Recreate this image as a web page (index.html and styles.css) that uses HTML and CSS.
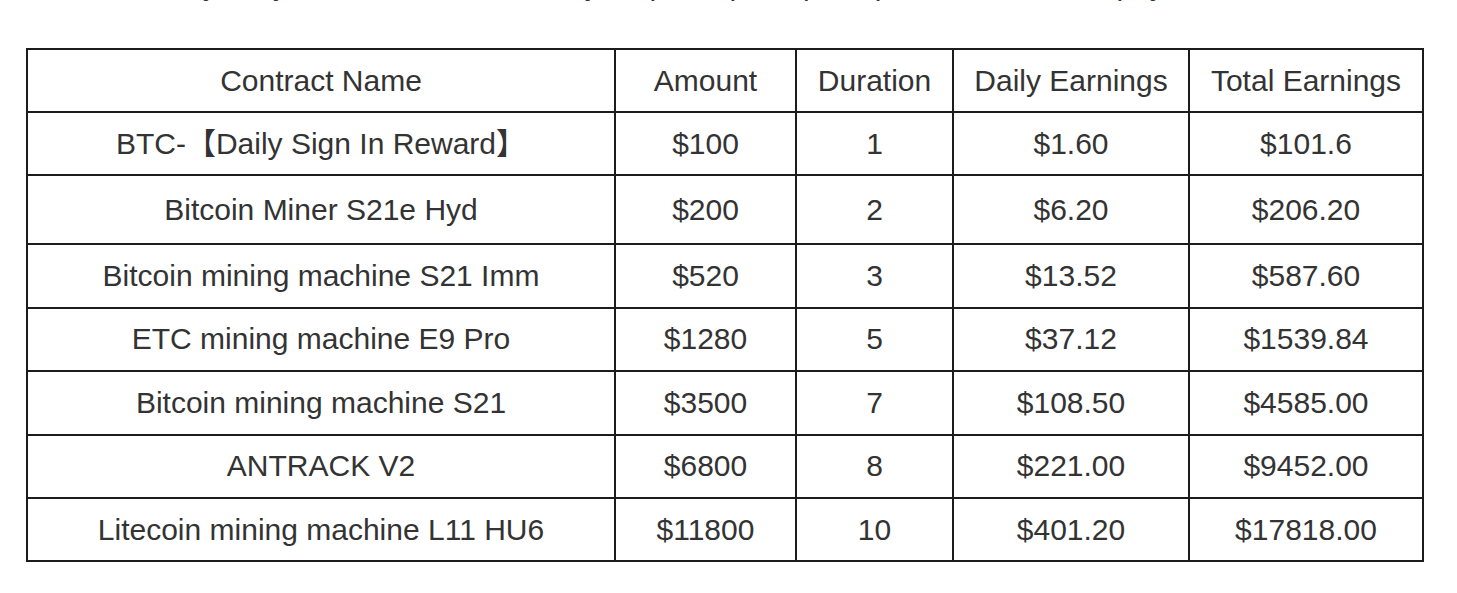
FILE: index.html
```html
<!DOCTYPE html>
<html>
<head>
<meta charset="utf-8">
<link rel="stylesheet" href="styles.css">
</head>
<body>
<div class="page">
  <p class="intro">Pay daily from the contract, daily output is paid, principal returned on expiry.</p>
  <table class="plans">
    <colgroup>
      <col class="c-name"><col class="c-amount"><col class="c-dur"><col class="c-daily"><col class="c-total">
    </colgroup>
    <thead>
      <tr><th>Contract Name</th><th>Amount</th><th>Duration</th><th>Daily Earnings</th><th>Total Earnings</th></tr>
    </thead>
    <tbody>
      <tr><td>BTC-【Daily Sign In Reward】</td><td>$100</td><td>1</td><td>$1.60</td><td>$101.6</td></tr>
      <tr class="tall"><td>Bitcoin Miner S21e Hyd</td><td>$200</td><td>2</td><td>$6.20</td><td>$206.20</td></tr>
      <tr><td>Bitcoin mining machine S21 Imm</td><td>$520</td><td>3</td><td>$13.52</td><td>$587.60</td></tr>
      <tr><td>ETC mining machine E9 Pro</td><td>$1280</td><td>5</td><td>$37.12</td><td>$1539.84</td></tr>
      <tr><td>Bitcoin mining machine S21</td><td>$3500</td><td>7</td><td>$108.50</td><td>$4585.00</td></tr>
      <tr><td>ANTRACK V2</td><td>$6800</td><td>8</td><td>$221.00</td><td>$9452.00</td></tr>
      <tr><td>Litecoin mining machine L11 HU6</td><td>$11800</td><td>10</td><td>$401.20</td><td>$17818.00</td></tr>
    </tbody>
  </table>
</div>
</body>
</html>
```

FILE: styles.css
```css
html, body {
  margin: 0;
  padding: 0;
  background: #ffffff;
}
.page {
  padding: 0 0 0 26px;
  font-family: "Liberation Sans", Arial, "Noto Sans CJK SC", sans-serif;
  color: #333333;
}
.intro {
  margin: -35px 0 43px 140px;
  font-size: 30px;
  line-height: 40px;
  white-space: nowrap;
}
.plans {
  border-collapse: collapse;
  width: 1396px;
  table-layout: fixed;
  font-size: 30px;
}
.c-name { width: 588px; }
.c-amount { width: 181px; }
.c-dur { width: 157px; }
.c-daily { width: 236px; }
.c-total { width: 234px; }
.plans th,
.plans td {
  border: 2px solid #1c1c1c;
  height: 61.4px;
  padding: 0;
  text-align: center;
  vertical-align: middle;
  font-weight: normal;
  line-height: 34px;
}
.plans th {
  height: 61px;
}
.plans .tall td {
  height: 67px;
}
```
